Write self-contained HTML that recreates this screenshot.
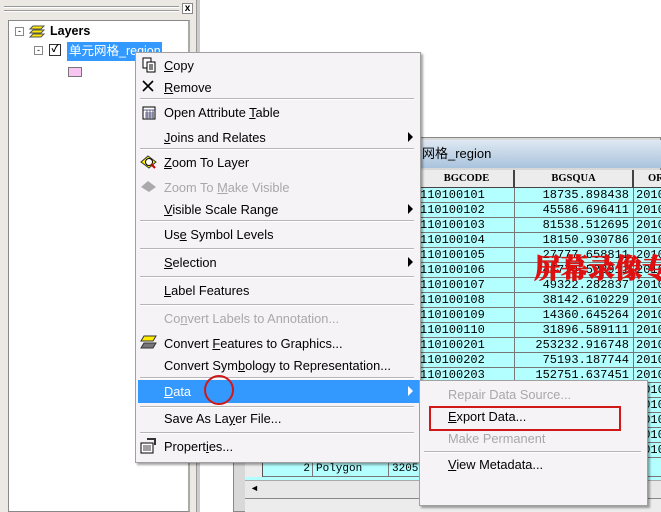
<!DOCTYPE html>
<html><head><meta charset="utf-8"><style>
*{margin:0;padding:0;box-sizing:border-box}
body{width:661px;height:512px;overflow:hidden;position:relative;background:#fff;font-family:"Liberation Sans","Noto Sans CJK SC",sans-serif;font-size:12px;color:#000}
.a{position:absolute}
.mi{position:absolute;left:28px;white-space:nowrap;font-size:12.8px}
.dis{color:#a8a8a8}
.sep{position:absolute;left:4px;right:6px;height:2px;border-top:1px solid #b8b4b8;border-bottom:1px solid #fff}
.arr{position:absolute;right:7px;width:0;height:0;border-left:5px solid #000;border-top:5px solid transparent;border-bottom:5px solid transparent}
u{text-decoration:underline}
.row{position:absolute;left:0;height:15px;border-bottom:1px solid #777;width:430px}
.c{position:absolute;top:0;height:15px;font-family:"Liberation Mono",monospace;font-size:12px;line-height:15px;border-right:1px solid #777}
</style></head><body>
<div class="a" style="left:0;top:0;width:197px;height:512px;background:#ece9e4;border-right:1px solid #999"></div>
<div class="a" style="left:4px;top:6px;width:175px;height:2px;border-top:1px solid #999;border-bottom:1px solid #fff"></div>
<div class="a" style="left:4px;top:10px;width:175px;height:2px;border-top:1px solid #999;border-bottom:1px solid #fff"></div>
<div class="a" style="left:182px;top:3px;width:11px;height:11px;border:1px solid #888;background:#fff;font-size:10px;line-height:9px;text-align:center;font-weight:bold">x</div>
<div class="a" style="left:8px;top:20px;width:182px;height:492px;background:#fff;border:1px solid #888;border-right:2px solid #aaa"></div>
<div class="a" style="left:15px;top:27px;width:9px;height:9px;border:1px solid #888;background:#fff;font-size:9px;line-height:6px;text-align:center">-</div>
<svg class="a" style="left:29px;top:24px" width="17" height="14"><path d="M4 2h11l-3 3H1z M4 6h11l-3 3H1z M4 10h11l-3 3H1z" fill="#ffe800" stroke="#555" stroke-width="1"/></svg>
<div class="a" style="left:50px;top:24px;font-weight:bold;font-size:12.5px">Layers</div>
<div class="a" style="left:34px;top:46px;width:9px;height:9px;border:1px solid #888;background:#fff;font-size:9px;line-height:6px;text-align:center">-</div>
<div class="a" style="left:49px;top:44px;width:12px;height:12px;border:1px solid #333;background:#fff;font-size:10px;line-height:10px;text-align:center;font-weight:bold">✓</div>
<div class="a" style="left:67px;top:42px;width:95px;height:19px;background:#3399ff;color:#fff;font-size:12.5px;line-height:19px;padding-left:2px;white-space:nowrap;overflow:hidden">单元网格_region</div>
<div class="a" style="left:68px;top:67px;width:14px;height:10px;background:#f6c6f0;border:1px solid #777"></div>
<div class="a" style="left:197px;top:0;width:3px;height:512px;background:#ccc"></div>
<div class="a" style="left:233px;top:137px;width:428px;height:375px;background:#d8d8d8;border:1px solid #888"></div>
<div class="a" style="left:236px;top:140px;width:425px;height:28px;background:linear-gradient(#dfe8f2,#a9c3dd);font-size:13px;line-height:28px;padding-left:186px;white-space:nowrap">网格_region</div>
<div class="a" style="left:245px;top:170px;width:416px;height:296px;background:#b3ffff;overflow:hidden">
<div class="row" style="top:0;height:18px;background:#ececec;border-bottom:1px solid #444">
<div class="c" style="left:175px;width:95px;height:18px;font-weight:bold;font-family:'Liberation Serif',serif;font-size:10.5px;text-align:center;line-height:18px;border-right:2px solid #444">BGCODE</div>
<div class="c" style="left:270px;width:119px;height:18px;font-weight:bold;font-family:'Liberation Serif',serif;font-size:10.5px;text-align:center;line-height:18px;border-right:2px solid #444">BGSQUA</div>
<div class="c" style="left:389px;width:40px;height:18px;font-weight:bold;font-family:'Liberation Serif',serif;font-size:10.5px;padding-left:14px;line-height:18px">OR</div>
</div>
</div>
<div id="rows" class="a" style="left:245px;top:188px;width:416px;height:278px;overflow:hidden"></div>
<div class="a" style="left:534px;top:247px;font-family:'Noto Serif CJK SC',serif;font-weight:900;font-size:27px;color:#e01010;white-space:nowrap;-webkit-text-stroke:0.8px #e01010">屏幕录像专</div>
<div class="a" style="left:245px;top:462px;width:416px;height:30px;overflow:hidden">
<div class="a" style="left:0;top:0;width:416px;height:15px;background:#b3ffff;border-bottom:1px solid #777"></div>
<div class="a" style="left:0;top:0;width:18px;height:30px;background:#ececec;border-right:1px solid #555"></div>
<div class="a" style="left:20px;top:0;font-family:'Liberation Mono',monospace;font-size:11px;line-height:15px;width:45px;text-align:right">2</div>
<div class="a" style="left:67px;top:0;font-family:'Liberation Mono',monospace;font-size:11px;line-height:15px;border-left:1px solid #777;padding-left:3px">Polygon</div>
<div class="a" style="left:143px;top:0;font-family:'Liberation Mono',monospace;font-size:11px;line-height:15px;border-left:1px solid #777;padding-left:3px">3205</div>
<div class="a" style="left:0;top:15px;width:416px;height:15px;background:#b3ffff"></div>
</div>
<div class="a" style="left:245px;top:480px;width:416px;height:18px;background:#e8e8e8;border-top:1px solid #aaa"><span style="position:absolute;left:5px;top:2px;font-size:9px">◄</span></div>
<div class="a" style="left:245px;top:498px;width:416px;height:14px;background:#ececec;border-top:1px solid #888"></div>
<div class="a" style="left:135px;top:52px;width:286px;height:411px;background:#f6f3f6;border:1px solid #a0a0a0;box-shadow:2px 2px 2px rgba(0,0,0,.35)">
<svg class="a" style="left:5px;top:4px" width="16" height="16"><rect x="2" y="1" width="8" height="10" fill="#fff" stroke="#000"/><rect x="6" y="5" width="8" height="10" fill="#fff" stroke="#000"/><path d="M8 8h4M8 10h4M8 12h4" stroke="#000"/></svg>
<div class="mi" style="top:5px"><u>C</u>opy</div>
<svg class="a" style="left:5px;top:26px" width="14" height="14"><path d="M2 2l10 10M12 2L2 12" stroke="#000" stroke-width="1.6"/></svg>
<div class="mi" style="top:27px"><u>R</u>emove</div>
<div class="sep" style="top:45px"></div>
<svg class="a" style="left:6px;top:53px" width="14" height="14"><rect x="1" y="1" width="12" height="12" fill="#fff" stroke="#000"/><path d="M1 4h12M3 7h9M3 9h9M3 11h9M5 4v9M8 4v9M11 4v9" stroke="#336" stroke-width=".7"/></svg>
<div class="mi" style="top:52px">Open Attribute <u>T</u>able</div>
<div class="mi" style="top:77px"><u>J</u>oins and Relates</div><div class="arr" style="top:79px"></div>
<div class="sep" style="top:95px"></div>
<svg class="a" style="left:4px;top:101px" width="18" height="16"><path d="M1 8l7-6 8 6-7 6z" fill="#ffec00" stroke="#333"/><circle cx="9" cy="8" r="3.5" fill="#fff" stroke="#000"/><path d="M11 10l4 4" stroke="#c00" stroke-width="2"/></svg>
<div class="mi" style="top:102px"><u>Z</u>oom To Layer</div>
<svg class="a" style="left:4px;top:126px" width="18" height="14"><path d="M1 8l7-6 8 6-7 5z" fill="#aaa"/></svg>
<div class="mi dis" style="top:127px">Zoom To <u>M</u>ake Visible</div>
<div class="mi" style="top:149px"><u>V</u>isible Scale Range</div><div class="arr" style="top:151px"></div>
<div class="sep" style="top:167px"></div>
<div class="mi" style="top:174px">Us<u>e</u> Symbol Levels</div>
<div class="sep" style="top:195px"></div>
<div class="mi" style="top:202px"><u>S</u>election</div><div class="arr" style="top:204px"></div>
<div class="sep" style="top:223px"></div>
<div class="mi" style="top:230px"><u>L</u>abel Features</div>
<div class="sep" style="top:251px"></div>
<div class="mi dis" style="top:258px">Co<u>n</u>vert Labels to Annotation...</div>
<svg class="a" style="left:4px;top:282px" width="18" height="14"><path d="M4 1h12l-3 5H1z" fill="#ffec00" stroke="#333"/><path d="M4 8h12l-3 5H1z" fill="#777" stroke="#333"/></svg>
<div class="mi" style="top:283px">Convert <u>F</u>eatures to Graphics...</div>
<div class="mi" style="top:305px">Convert Sym<u>b</u>ology to Representation...</div>
<div class="sep" style="top:324px"></div>
<div class="a" style="left:2px;top:327px;width:282px;height:23px;background:#3399ff"></div>
<div class="mi" style="top:331px;color:#fff"><u>D</u>ata</div>
<div class="arr" style="top:333px;border-left-color:#fff"></div>
<div class="a" style="left:68px;top:322px;width:30px;height:30px;border:2px solid #d01818;border-radius:50%"></div>
<div class="sep" style="top:353px"></div>
<div class="mi" style="top:358px">Save As La<u>y</u>er File...</div>
<div class="sep" style="top:379px"></div>
<svg class="a" style="left:4px;top:385px" width="18" height="16"><rect x="1" y="5" width="12" height="10" fill="#fff" stroke="#000"/><path d="M3 8h8M3 10h8M3 12h8" stroke="#000" stroke-width=".8"/><path d="M7 1h8v6" fill="none" stroke="#333" stroke-width="2"/></svg>
<div class="mi" style="top:386px">Propert<u>i</u>es...</div>
</div>
<div class="a" style="left:419px;top:380px;width:229px;height:126px;background:#f6f3f6;border:1px solid #a0a0a0;box-shadow:2px 2px 2px rgba(0,0,0,.35)">
<div class="mi dis" style="top:6px">Repair Data Source...</div>
<div class="a" style="left:9px;top:25px;width:192px;height:25px;border:2px solid #d01818"></div>
<div class="mi" style="top:28px"><u>E</u>xport Data...</div>
<div class="mi dis" style="top:50px">Make Permanent</div>
<div class="sep" style="top:70px"></div>
<div class="mi" style="top:76px"><u>V</u>iew Metadata...</div>
</div>
<script>
var d=[["110100101","18735.898438"],["110100102","45586.696411"],["110100103","81538.512695"],["110100104","18150.930786"],["110100105","27777.658811"],["110100106","44774.522911"],["110100107","49322.282837"],["110100108","38142.610229"],["110100109","14360.645264"],["110100110","31896.589111"],["110100201","253232.916748"],["110100202","75193.187744"],["110100203","152751.637451"],["",""],["",""],["",""],["",""],["",""]];
var h="";d.forEach(function(r,i){h+='<div class="row" style="top:'+(i*15)+'px;background:#b3ffff"><div class="c" style="left:175px;width:95px">'+r[0]+'</div><div class="c" style="left:270px;width:119px;text-align:right;padding-right:4px">'+r[1]+'</div><div class="c" style="left:389px;width:40px;padding-left:2px">2010</div></div>'});
document.getElementById("rows").innerHTML=h;
</script>
</body></html>
